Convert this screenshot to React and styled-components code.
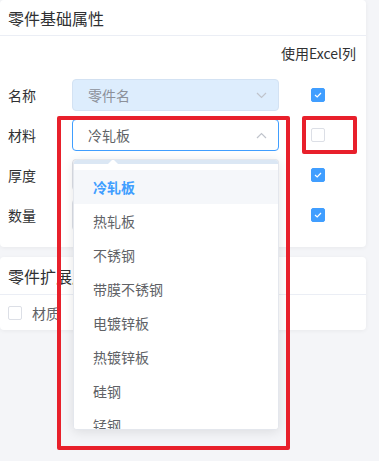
import styled, { createGlobalStyle } from 'styled-components';

const GlobalStyle = createGlobalStyle`
body {
  margin: 0;
  background: #f4f5f8;
  font-family: "Noto Sans CJK SC", "Noto Sans", sans-serif;
}
`

const Page = styled.div`
position: relative;
width: 379px;
height: 461px;
padding-right: 13px;
box-sizing: border-box;
overflow: hidden;
`

const Card = styled.div`
background: #fff;
border-radius: 4px;
box-shadow: 0 1px 4px rgba(0, 0, 0, 0.05);
margin-top: ${p => p.gap || 0}px;
`

const CardHeader = styled.div`
height: ${p => p.h || 35}px;
display: flex;
align-items: center;
padding: 0 8px;
border-bottom: 1px solid #ebeef5;
font-size: 16px;
color: #303133;
`

const Body = styled.div`
padding: 0 10px 12px 8px;
`

const ExcelRow = styled.div`
height: 34px;
display: flex;
align-items: center;
justify-content: flex-end;
font-size: 14px;
color: #303133;
margin-bottom: 5px;
`

const Row = styled.div`
height: 40px;
display: grid;
grid-template-columns: 64px 207px 1fr;
align-items: center;
`

const Label = styled.span`
font-size: 14px;
color: #303133;
`

const Select = styled.div`
height: 32px;
box-sizing: border-box;
border: 1px solid ${p => (p.active ? '#409eff' : p.filled ? '#d3e2f3' : '#dcdfe6')};
background: ${p => (p.filled ? '#ddedfd' : '#fff')};
border-radius: 4px;
display: flex;
align-items: center;
justify-content: space-between;
padding: 0 11px 0 15px;
font-size: 14px;
color: ${p => (p.placeholder ? '#8c9099' : '#606266')};
`

const CheckCell = styled.div`
display: flex;
justify-content: center;
`

const Box = styled.span`
width: 14px;
height: 14px;
box-sizing: border-box;
border-radius: 2px;
border: 1px solid ${p => (p.checked ? '#409eff' : '#dcdfe6')};
background: ${p => (p.checked ? '#409eff' : '#fff')};
display: inline-flex;
align-items: center;
justify-content: center;
`

const ExtRow = styled.div`
height: 35px;
display: flex;
align-items: center;
gap: 10px;
padding: 0 8px;
font-size: 14px;
color: #606266;
`

const Dropdown = styled.div`
position: absolute;
left: 73px;
top: 159px;
width: 206px;
height: 271px;
box-sizing: border-box;
background: #fff;
border: 1px solid #e4e7ed;
border-radius: 4px;
box-shadow: 0 2px 12px rgba(0, 0, 0, 0.1);
overflow: hidden;
`

const Strip = styled.div`
position: relative;
height: 4px;
background: #dbe7f4;
`

const Arrow = styled.span`
position: absolute;
left: 33px;
top: -1px;
width: 0;
height: 0;
border-left: 6px solid transparent;
border-right: 6px solid transparent;
border-bottom: 6px solid #fff;
`

const List = styled.ul`
list-style: none;
margin: 0;
padding: 6px 0 0;
`

const Item = styled.li`
height: 34px;
line-height: 34px;
padding-left: 19px;
font-size: 14px;
color: ${p => (p.selected ? '#409eff' : '#606266')};
font-weight: ${p => (p.selected ? 700 : 400)};
background: ${p => (p.selected ? '#f5f7fa' : '#fff')};
`

const Mark = styled.div`
position: absolute;
left: ${p => p.x}px;
top: ${p => p.y}px;
width: ${p => p.w}px;
height: ${p => p.h}px;
box-sizing: border-box;
border: 4px solid #e8202b;
border-radius: 2px;
pointer-events: none;
`

const Chevron = ({ up }) => (
  <svg width="11" height="7" viewBox="0 0 11 7">
    <path d={up ? 'M1 6 L5.5 1.5 L10 6' : 'M1 1 L5.5 5.5 L10 1'} fill="none" stroke="#c0c4cc" strokeWidth="1.2" />
  </svg>
)

const Check = ({ checked }) => (
  <Box checked={checked}>
    {checked && (
      <svg width="8" height="6" viewBox="0 0 8 6">
        <path d="M1 3 L3.2 5 L7 1" fill="none" stroke="#fff" strokeWidth="1.2" />
      </svg>
    )}
  </Box>
)

const materials = ['冷轧板', '热轧板', '不锈钢', '带膜不锈钢', '电镀锌板', '热镀锌板', '硅钢', '锰钢']

const App = () => {
  return (
    <>
      <GlobalStyle />
      <Page>
        <Card>
          <CardHeader>零件基础属性</CardHeader>
          <Body>
            <ExcelRow>使用Excel列</ExcelRow>
            <Row>
              <Label>名称</Label>
              <Select filled placeholder>零件名<Chevron /></Select>
              <CheckCell><Check checked /></CheckCell>
            </Row>
            <Row>
              <Label>材料</Label>
              <Select active>冷轧板<Chevron up /></Select>
              <CheckCell><Check /></CheckCell>
            </Row>
            <Row>
              <Label>厚度</Label>
              <Select><span /><Chevron /></Select>
              <CheckCell><Check checked /></CheckCell>
            </Row>
            <Row>
              <Label>数量</Label>
              <Select><span /><Chevron /></Select>
              <CheckCell><Check checked /></CheckCell>
            </Row>
          </Body>
        </Card>

        <Card gap={10}>
          <CardHeader h={37}>零件扩展属性</CardHeader>
          <ExtRow>
            <Check />
            材质
          </ExtRow>
        </Card>

        <Dropdown>
          <Strip><Arrow /></Strip>
          <List>
            {materials.map((m, i) => (
              <Item key={m} selected={i === 0}>{m}</Item>
            ))}
          </List>
        </Dropdown>

        <Mark x={57} y={116} w={233} h={334} />
        <Mark x={302} y={116} w={55} h={38} />
      </Page>
    </>
  )
}

export default App
